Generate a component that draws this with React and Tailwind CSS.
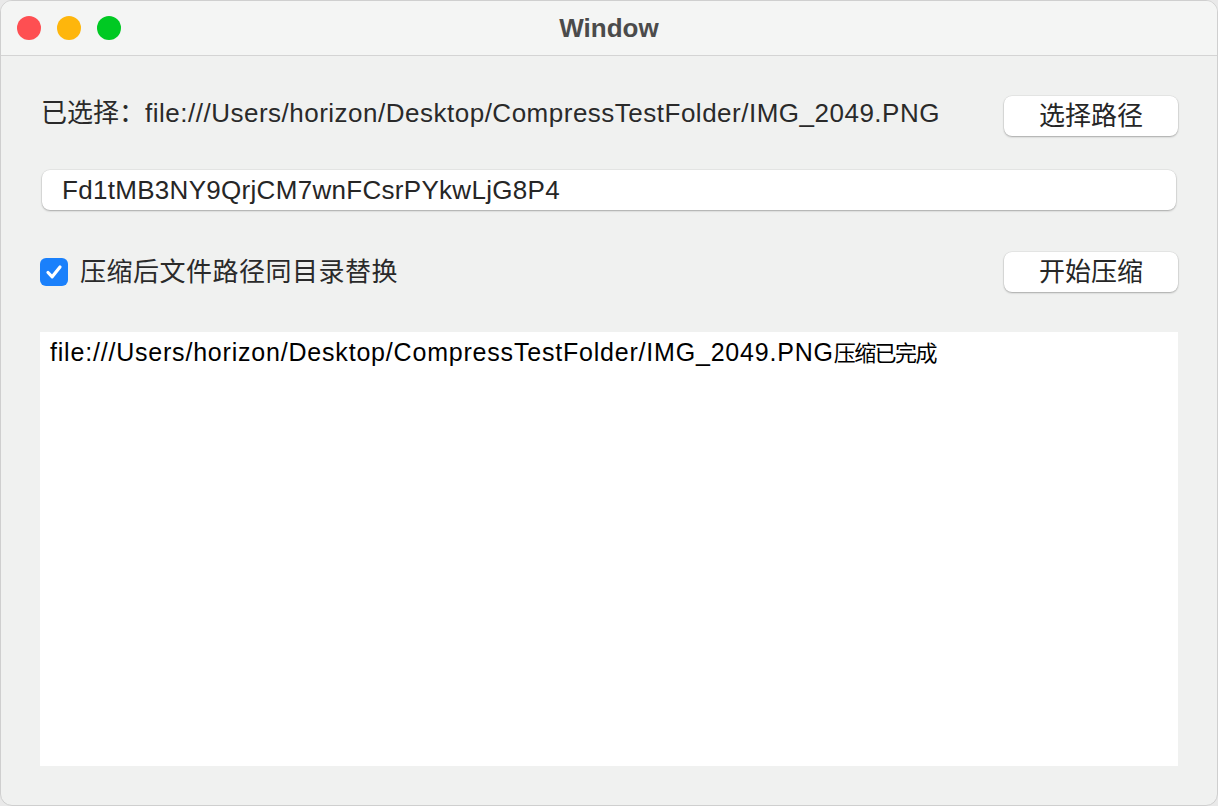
import { useState } from 'react';

const FONT = { fontFamily: '"Liberation Sans", "Noto Sans CJK SC", sans-serif' };
const PATH = 'file:///Users/horizon/Desktop/CompressTestFolder/IMG_2049.PNG';

function MacButton({ children }) {
  return (
    <button className="w-[174px] h-[40px] rounded-[8px] bg-white text-[26px] leading-none text-[#262626] shadow-[0_1px_2px_rgba(0,0,0,0.28),0_0_0_0.5px_rgba(0,0,0,0.08)] flex items-center justify-center shrink-0">
      {children}
    </button>
  );
}

export default function App() {
  const [replace, setReplace] = useState(true);
  const [key, setKey] = useState('Fd1tMB3NY9QrjCM7wnFCsrPYkwLjG8P4');

  return (
    <div className="w-[1218px] h-[806px] bg-[#e9e9e9]" style={FONT}>
      <div className="w-full h-full rounded-[12px] overflow-hidden bg-[#f0f1f0] border border-[#cfcfcf] flex flex-col">
        {/* Title bar */}
        <div className="h-[55px] shrink-0 bg-[#f4f5f4] border-b border-[#d4d4d4] flex items-center relative">
          <div className="flex items-center gap-[16px] pl-[16px]">
            <span className="w-[24px] h-[24px] rounded-full bg-[#fe4f52]" />
            <span className="w-[24px] h-[24px] rounded-full bg-[#feb60c]" />
            <span className="w-[24px] h-[24px] rounded-full bg-[#00c923]" />
          </div>
          <div className="absolute inset-0 flex items-center justify-center text-[26px] font-bold text-[#4b4b4b] pointer-events-none">
            Window
          </div>
        </div>

        {/* Body */}
        <div className="flex-1 flex flex-col pl-[39px] pr-[39px] pt-[40px] pb-[39px]">
          <div className="flex items-center justify-between h-[40px]">
            <span className="text-[26px] leading-none text-[#2a2a2a] pl-[1px] -mt-[6px]">
              已选择：<span className="tracking-[0.5px]">{PATH}</span>
            </span>
            <MacButton>选择路径</MacButton>
          </div>

          <input
            value={key}
            onChange={(e) => setKey(e.target.value)}
            className="mt-[34px] ml-[2px] mr-[2px] h-[40px] rounded-[8px] bg-white px-[20px] text-[26px] tracking-[0.3px] text-[#262626] outline-none shadow-[0_1px_2px_rgba(0,0,0,0.28),0_0_0_0.5px_rgba(0,0,0,0.08)]"
          />

          <div className="mt-[42px] flex items-center justify-between h-[40px]">
            <label className="flex items-center gap-[12px] cursor-pointer">
              <span
                onClick={() => setReplace(!replace)}
                className={`w-[28px] h-[28px] rounded-[6px] flex items-center justify-center ${replace ? 'bg-[#1a80fb]' : 'bg-white border border-gray-300'}`}
              >
                {replace && (
                  <svg width="20" height="20" viewBox="0 0 20 20" fill="none">
                    <path d="M4 10.5 L8.2 14.8 L16 5" stroke="white" strokeWidth="3.2" strokeLinecap="round" strokeLinejoin="round" />
                  </svg>
                )}
              </span>
              <span className="text-[26px] leading-none tracking-[0.5px] text-[#2a2a2a]">压缩后文件路径同目录替换</span>
            </label>
            <MacButton>开始压缩</MacButton>
          </div>

          <div className="mt-[40px] flex-1 bg-white px-[10px] pt-[4px]">
            <div className="text-[25px] leading-[32px] text-black">
              <span className="tracking-[0.8px]">{PATH}</span>
              <span className="text-[22px] tracking-[-1.6px]">压缩已完成</span>
            </div>
          </div>
        </div>
      </div>
    </div>
  );
}
